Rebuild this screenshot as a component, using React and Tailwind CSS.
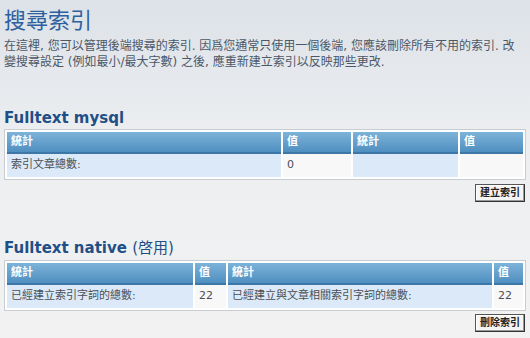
const cjk = "'DejaVu Sans', 'Noto Sans CJK TC', sans-serif";

const Th = ({ children }) => (
    <th className="h-[22px] px-[4px] text-left align-middle text-[11px] font-bold text-white bg-gradient-to-b from-[#7db3d9] to-[#4f8fc0] border-b-2 border-[#3d77a8]">
        {children}
    </th>
);

const Td = ({ children, alt }) => (
    <td
        className={`h-[23px] px-[4px] align-middle text-[11px] text-[#4a4f55] ${alt ? 'bg-[#f8f8f8]' : 'bg-[#dbe9f9]'}`}
    >
        {children}
    </td>
);

const StatTable = ({ cols, rows }) => (
    <div className="mx-[4px] border border-[#c9ccd0] bg-white py-[2px]">
        <table className="w-full table-fixed border-separate border-spacing-x-[2px] border-spacing-y-0">
            <colgroup>
                {cols.map((w, i) => (
                    <col key={i} style={{ width: w }} />
                ))}
            </colgroup>
            <thead>
                <tr>
                    <Th>統計</Th>
                    <Th>值</Th>
                    <Th>統計</Th>
                    <Th>值</Th>
                </tr>
            </thead>
            <tbody>
                {rows.map((r, i) => (
                    <tr key={i}>
                        <Td>{r[0]}</Td>
                        <Td alt>{r[1]}</Td>
                        <Td>{r[2]}</Td>
                        <Td alt>{r[3]}</Td>
                    </tr>
                ))}
            </tbody>
        </table>
    </div>
);

const Button = ({ children }) => (
    <div className="flex justify-end pr-[5px]">
        <button className="h-[18px] w-[50px] border border-[#555] border-r-[#333] border-b-[#333] bg-[#f4f4f4] px-0 text-[10px] font-bold leading-none text-[#222] shadow-[inset_-1px_-1px_0_#999,inset_1px_1px_0_#fff]">
            {children}
        </button>
    </div>
);

export default function App() {
    return (
        <div
            className="h-[338px] w-[530px] overflow-hidden bg-gradient-to-b from-[#dde2e8] via-[#eceef0] via-40% to-[#f2f2f2]"
            style={{ fontFamily: cjk }}
        >
            <h1 className="px-[4px] pt-[8px] text-[22px] leading-[26px] font-normal text-[#2e5f9e]">搜尋索引</h1>
            <p className="mt-[4px] px-[4px] pr-[8px] text-[12px] leading-[16px] text-[#4b5868]">
                在這裡, 您可以管理後端搜尋的索引. 因爲您通常只使用一個後端, 您應該刪除所有不用的索引. 改變搜尋設定 (例如最小/最大字數) 之後, 應重新建立索引以反映那些更改.
            </p>

            <h2 className="mt-[39px] px-[4px] text-[15px] leading-[19px] font-bold text-[#1f4f86]">Fulltext mysql</h2>
            <div className="mt-[1px]">
                <StatTable cols={['274px', '68px', '105px', '63px']} rows={[['索引文章總數:', '0', '', '']]} />
            </div>
            <div className="mt-[4px]">
                <Button>建立索引</Button>
            </div>

            <h2 className="mt-[37px] px-[4px] text-[15px] leading-[19px] font-bold text-[#1f4f86]">
                Fulltext native <span className="font-normal">(啓用)</span>
            </h2>
            <div className="mt-[2px]">
                <StatTable
                    cols={['186px', '31px', '264px', '29px']}
                    rows={[['已經建立索引字詞的總數:', '22', '已經建立與文章相關索引字詞的總數:', '22']]}
                />
            </div>
            <div className="mt-[3px]">
                <Button>刪除索引</Button>
            </div>
        </div>
    );
}
